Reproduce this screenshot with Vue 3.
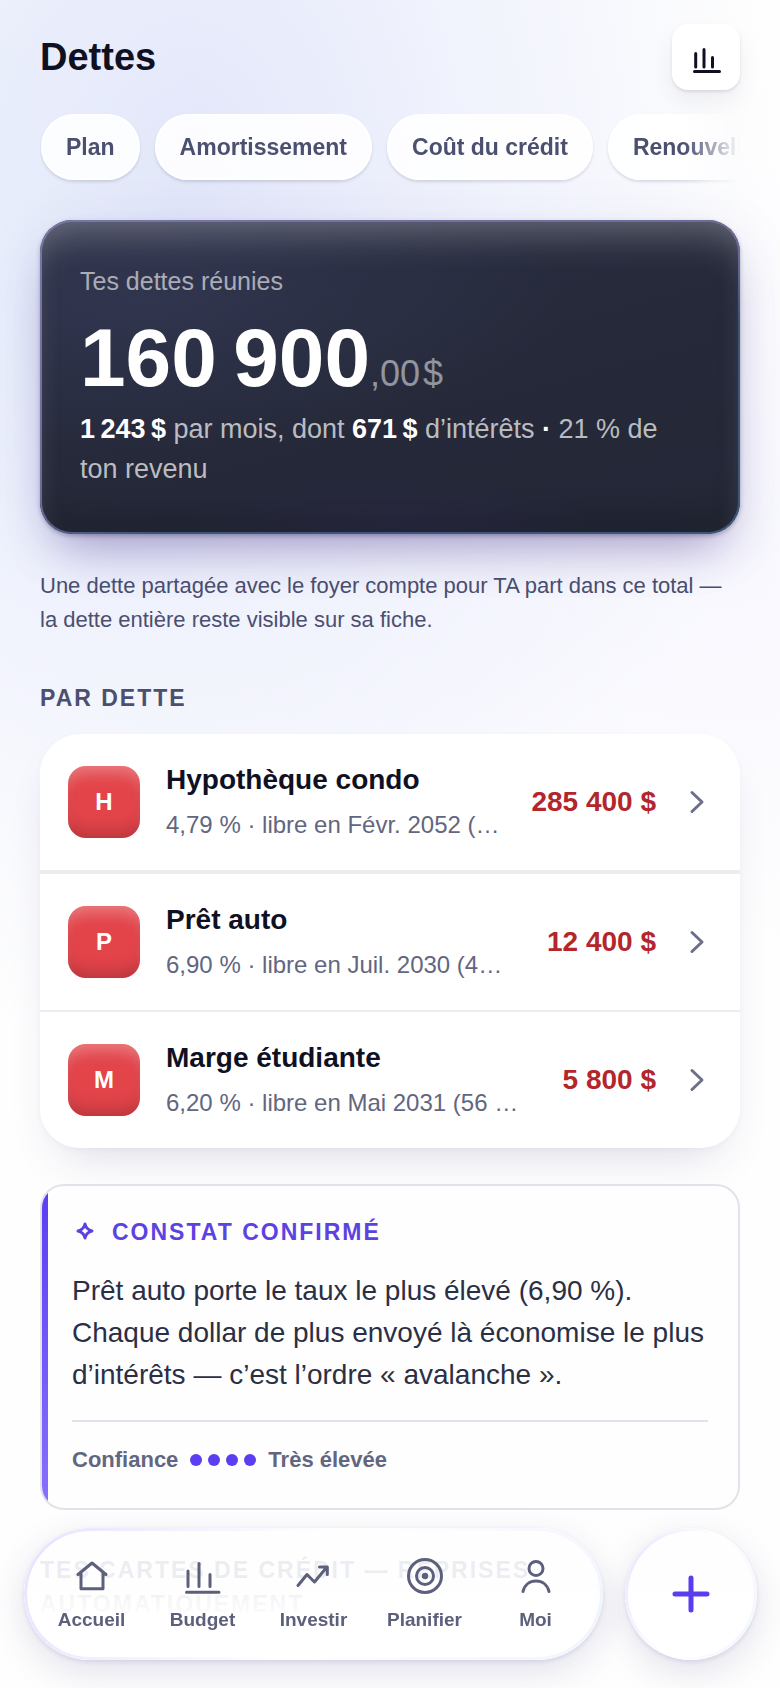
<script setup>
const tabs = ['Plan', 'Amortissement', 'Coût du crédit', 'Renouvellement']

const debts = [
  { initial: 'H', name: 'Hypothèque condo', detail: '4,79 % · libre en Févr. 2052 (307 mois)', amount: '285 400 $' },
  { initial: 'P', name: 'Prêt auto', detail: '6,90 % · libre en Juil. 2030 (4½ ans)', amount: '12 400 $' },
  { initial: 'M', name: 'Marge étudiante', detail: '6,20 % · libre en Mai 2031 (56 mois)', amount: '5 800 $' },
]
</script>

<template>
  <div class="page">
    <header class="top">
      <h1>Dettes</h1>
      <button class="chart-btn" type="button" aria-label="Statistiques">
        <svg viewBox="0 0 40 40" aria-hidden="true">
          <path d="M9.7 16.500v13.500M18 12.500v17.500M26.500 20.500v9.500M8.500 34.600h25" />
        </svg>
      </button>
    </header>

    <div class="tabs">
      <button v-for="tab in tabs" :key="tab" class="tab" type="button">{{ tab }}</button>
    </div>

    <main>
      <section class="hero">
        <p class="hero-label">Tes dettes réunies</p>
        <p class="hero-total">160&#8239;900<span class="cents">,00</span><span class="currency">$</span></p>
        <p class="hero-line">
          <strong>1&#8239;243&#8239;$</strong> par mois, dont <strong>671&#8239;$</strong> d’intérêts <strong>·</strong> 21&nbsp;% de ton revenu
        </p>
      </section>

      <p class="note">Une dette partagée avec le foyer compte pour TA part dans ce total — la dette entière reste visible sur sa fiche.</p>

      <h2 class="eyebrow">PAR DETTE</h2>
      <ul class="list">
        <li v-for="debt in debts" :key="debt.name">
          <a class="row" href="#">
            <span class="avatar">{{ debt.initial }}</span>
            <span class="row-text">
              <span class="row-name">{{ debt.name }}</span>
              <span class="row-detail">{{ debt.detail }}</span>
            </span>
            <span class="row-amount">{{ debt.amount }}</span>
            <svg class="chevron" viewBox="0 0 30 30" aria-hidden="true"><path d="M10 5.500l10 9.500-10 9.500" /></svg>
          </a>
        </li>
      </ul>

      <article class="insight">
        <h3 class="insight-title">
          <svg viewBox="0 0 26 26" aria-hidden="true">
            <path d="M13 5c.8 4 2.700 5.900 7 7-4.300 1.100-6.200 3-7 7-.8-4-2.700-5.900-7-7 4.300-1.100 6.200-3 7-7z" />
          </svg>
          CONSTAT CONFIRMÉ
        </h3>
        <p class="insight-body">Prêt auto porte le taux le plus élevé (6,90&nbsp;%). Chaque dollar de plus envoyé là économise le plus d’intérêts — c’est l’ordre «&nbsp;avalanche&nbsp;».</p>
        <div class="confidence">
          <span>Confiance</span>
          <span class="dots" aria-hidden="true"><i v-for="n in 4" :key="n"></i></span>
          <span>Très élevée</span>
        </div>
      </article>

      <h2 class="eyebrow cards-title">TES CARTES DE CRÉDIT — REPRISES AUTOMATIQUEMENT</h2>
    </main>

    <div class="dock">
      <nav class="bar">
        <a href="#">
          <svg viewBox="0 0 40 40" aria-hidden="true"><path d="M6 18.500L20 7l14 11.500M9 16.500v16.200h22V16.500" /></svg>
          Accueil
        </a>
        <a href="#">
          <svg viewBox="0 0 40 40" aria-hidden="true"><path d="M5 15v15.500M16 7.500v23M27 18.500v12M3.500 36.200h32.500" /></svg>
          Budget
        </a>
        <a href="#">
          <svg viewBox="0 0 40 40" aria-hidden="true"><path d="M4 29.500l9-11 7.500 7.500L32.500 11.500M25.500 11h7.800v7.500" /></svg>
          Investir
        </a>
        <a href="#">
          <svg viewBox="0 0 40 40" aria-hidden="true">
            <circle cx="20" cy="20" r="16.500" /><circle cx="20" cy="20" r="8.500" /><circle class="solid" cx="20" cy="20" r="3.200" />
          </svg>
          Planifier
        </a>
        <a href="#">
          <svg viewBox="0 0 40 40" aria-hidden="true"><circle cx="20" cy="12.500" r="7" /><path d="M7 35.500C8.500 29 13.500 25 20 25s11.500 4 13 10.500" /></svg>
          Moi
        </a>
      </nav>
      <button class="add" type="button" aria-label="Ajouter">
        <svg viewBox="0 0 40 40" aria-hidden="true"><path d="M20 4v32M4 20h32" /></svg>
      </button>
    </div>
  </div>
</template>

<style>
body {
  margin: 0;
  background: #fefefe;
}
</style>

<style scoped>
.page {
  box-sizing: border-box;
  min-height: 100vh;
  padding: 24px 40px 48px;
  font-family: "Liberation Sans", Arial, sans-serif;
  color: #0f1123;
  background:
    radial-gradient(ellipse 260px 420px at 0 300px, rgba(229, 238, 252, 0.5), rgba(229, 238, 252, 0)),
    radial-gradient(ellipse 600px 860px at 180px 200px, rgba(224, 228, 249, 0.95), rgba(235, 238, 252, 0.7) 50%, rgba(250, 250, 255, 0) 100%),
    radial-gradient(ellipse 500px 400px at 720px 560px, rgba(243, 243, 254, 0.6), rgba(250, 250, 255, 0) 100%),
    #fefefe;
}

h1, h2, h3, p, ul { margin: 0; padding: 0; }
ul { list-style: none; }
a { color: inherit; text-decoration: none; }
button { border: 0; padding: 0; font: inherit; cursor: pointer; }

svg {
  display: block;
  flex: none;
  fill: none;
  stroke: currentColor;
  stroke-width: 3;
  stroke-linecap: round;
  stroke-linejoin: round;
}

.top {
  display: flex;
  justify-content: space-between;
  align-items: center;
  height: 66px;
}
h1 { font-size: 38px; line-height: 50px; }

.chart-btn {
  display: grid;
  place-items: center;
  width: 68px;
  height: 66px;
  border-radius: 16px;
  color: #0f1123;
  background: #fff;
  box-shadow: 0 2px 3px rgba(20, 20, 50, 0.1), 0 12px 24px rgba(20, 20, 50, 0.06);
}
.chart-btn svg { width: 40px; height: 40px; }

.tabs {
  display: flex;
  gap: 15px;
  margin-top: 12px;
  padding: 12px 1px;
  overflow-x: auto;
  scrollbar-width: none;
  mask-image: linear-gradient(to right, #000 calc(100% - 56px), transparent);
}
.tab {
  flex: none;
  height: 66px;
  padding: 0 25px;
  border-radius: 33px;
  font-size: 23px;
  font-weight: 700;
  color: #4b4f70;
  background: rgba(255, 255, 255, 0.88);
  box-shadow: inset 0 0 0 2px rgba(255, 255, 255, 0.7), 0 2px 3px rgba(30, 30, 70, 0.14);
}

.hero {
  position: relative;
  margin-top: 28px;
  padding: 41px 40px 45px;
  border-radius: 32px;
  color: rgba(255, 255, 255, 0.7);
  background:
    radial-gradient(ellipse 60% 50% at 15% 25%, rgba(58, 63, 96, 0.45), rgba(58, 63, 96, 0)),
    radial-gradient(ellipse 30% 20% at 50% 100%, rgba(50, 40, 80, 0.5), rgba(50, 40, 80, 0)),
    linear-gradient(165deg, #2b2f44, #252939 55%, #232736);
  box-shadow:
    inset 0 28px 36px -14px rgba(255, 255, 255, 0.27),
    inset 0 -24px 32px -14px rgba(16, 20, 26, 0.4),
    inset 0 0 28px rgba(255, 255, 255, 0.04),
    0 2px 4px rgba(30, 25, 70, 0.3),
    0 28px 48px -18px rgba(60, 40, 130, 0.4),
    0 12px 60px rgba(70, 60, 150, 0.1);
}
.hero::before,
.bar::before,
.add::before {
  content: "";
  position: absolute;
  inset: 0;
  border-radius: inherit;
  padding: 2px;
  background: linear-gradient(160deg, #7a76a8, #6c6a9c 50%, #3b5578 62%, #3b587c);
  mask: linear-gradient(#000 0 0) content-box exclude, linear-gradient(#000 0 0);
  pointer-events: none;
}
.hero-label { font-size: 25px; line-height: 40px; color: rgba(255, 255, 255, 0.6); }
.hero-total {
  margin-top: 16px;
  font-size: 82px;
  line-height: 82px;
  font-weight: 700;
  color: #fff;
}
.cents, .currency {
  font-size: 36px;
  line-height: 36px;
  font-weight: 400;
  color: rgba(255, 255, 255, 0.5);
}
.currency { margin-left: 3px; }
.hero-line { margin-top: 10px; font-size: 27px; line-height: 40px; }
.hero-line strong { color: #fff; }

.note { margin-top: 35px; font-size: 22px; line-height: 34px; color: #4b4f70; }

.eyebrow {
  margin-top: 47px;
  font-size: 23px;
  line-height: 28px;
  font-weight: 700;
  letter-spacing: 2px;
  color: #4b4f70;
}

.list {
  margin-top: 22px;
  border-radius: 40px;
  overflow: hidden;
  background: rgba(255, 255, 255, 0.92);
  box-shadow: 0 24px 48px -20px rgba(50, 40, 110, 0.18), 0 2px 6px rgba(50, 40, 110, 0.03);
}
.list li + li { border-top: 2px solid #ededef; }
.list li:nth-child(2) { border-top-width: 4px; }
.row {
  display: flex;
  align-items: center;
  gap: 26px;
  min-height: 136px;
  padding: 0 28px;
}
.avatar {
  display: grid;
  place-items: center;
  flex: none;
  width: 72px;
  height: 72px;
  border-radius: 18px;
  font-size: 24px;
  font-weight: 700;
  color: #fff;
  background: #e2444a;
  box-shadow: inset 0 14px 16px -8px rgba(255, 255, 255, 0.32), inset 0 -14px 16px -8px rgba(90, 20, 30, 0.3);
}
.row-text { display: flex; flex-direction: column; gap: 10px; flex: 1; min-width: 0; }
.row-name { font-size: 28px; line-height: 36px; font-weight: 700; }
.row-detail {
  font-size: 24px;
  line-height: 34px;
  color: #62667f;
  white-space: nowrap;
  overflow: hidden;
  text-overflow: ellipsis;
}
.row-amount { flex: none; font-size: 28px; font-weight: 700; color: #b3262b; white-space: nowrap; }
.chevron { width: 30px; height: 30px; color: #6b6f88; }

.insight {
  position: relative;
  margin-top: 36px;
  padding: 32px 30px 34px;
  border: 2px solid #e2e2ea;
  border-radius: 24px;
  overflow: hidden;
  background: #fefefe;
}
.insight::before {
  content: "";
  position: absolute;
  inset: 0 auto 0 0;
  width: 6px;
  background: linear-gradient(#5b3df2, #8a70ff);
}
.insight-title {
  display: flex;
  align-items: center;
  gap: 14px;
  font-size: 23px;
  line-height: 28px;
  letter-spacing: 2px;
  color: #5d42e2;
}
.insight-title svg { width: 26px; height: 26px; }
.insight-body { margin-top: 24px; font-size: 28px; line-height: 42px; color: #2b2f45; }
.confidence {
  display: flex;
  align-items: center;
  gap: 12px;
  margin-top: 24px;
  padding-top: 24px;
  border-top: 2px solid #e2e2ea;
  font-size: 22px;
  line-height: 28px;
  font-weight: 700;
  color: #62667f;
}
.dots { display: flex; gap: 6px; }
.dots i { width: 12px; height: 12px; border-radius: 50%; background: #5b3df2; }

.cards-title { margin-top: 43px; line-height: 34px; }

.dock {
  position: fixed;
  inset: auto 23px 28px 24px;
  display: flex;
  gap: 22px;
}
.bar, .add {
  position: relative;
  height: 132px;
  border-radius: 66px;
  background: linear-gradient(rgba(254, 254, 255, 0.9) 38%, rgba(255, 255, 255, 0.98) 65%);
  box-shadow: 0 2px 4px rgba(60, 50, 120, 0.12), 0 12px 36px rgba(60, 50, 120, 0.14);
}
.bar::before, .add::before {
  padding: 3px;
  background: linear-gradient(115deg, #e6e2ff, #f4f2ff 25%, #ffffff 50%, #f0f5fe);
}
.bar {
  display: flex;
  flex: 1;
  box-sizing: border-box;
  padding: 0 12px;
}
.bar a {
  display: flex;
  flex: 1;
  flex-direction: column;
  align-items: center;
  justify-content: center;
  gap: 12px;
  font-size: 19px;
  line-height: 24px;
  font-weight: 700;
  color: #5c607c;
}
.bar svg { width: 40px; height: 40px; }
.solid { fill: currentColor; stroke: none; }
.add {
  display: grid;
  place-items: center;
  width: 132px;
  color: #5b3df0;
}
.add svg { width: 40px; height: 40px; stroke-width: 5; }
</style>
